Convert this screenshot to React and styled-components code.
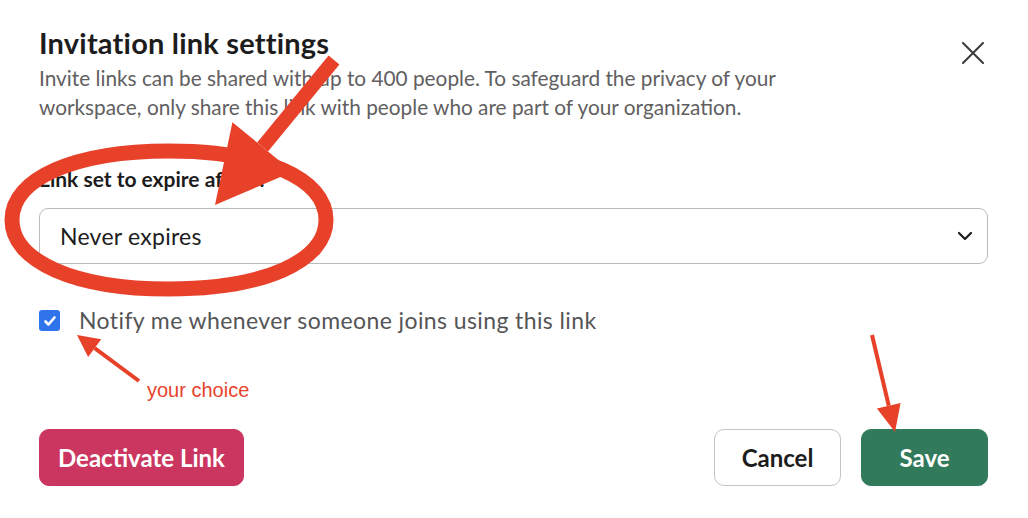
import React, { useState } from 'react'
import styled, { createGlobalStyle } from 'styled-components'

const GlobalStyle = createGlobalStyle`
  html, body {
    margin: 0;
    padding: 0;
    background: #ffffff;
  }
  body {
    font-family: Lato, "Open Sans", sans-serif;
    color: #1d1c1d;
  }
`

const Dialog = styled.section`
  position: relative;
  width: 1028px;
  height: 518px;
  box-sizing: border-box;
  padding: 23px 40px 0 39px;
  display: flex;
  flex-direction: column;
  overflow: hidden;
`

const Header = styled.header`
  display: flex;
  justify-content: space-between;
  align-items: flex-start;
`

const Title = styled.h1`
  margin: 0;
  font-size: 29px;
  line-height: 40px;
  letter-spacing: 0.2px;
  font-weight: 700;
  color: #1d1c1d;
`

const CloseButton = styled.button`
  border: none;
  background: none;
  padding: 0;
  margin: 15px 0 0 0;
  width: 30px;
  height: 30px;
  display: flex;
  align-items: center;
  justify-content: center;
  color: #3b3b3d;
  cursor: pointer;
`

const Description = styled.p`
  margin: 0;
  width: 800px;
  font-size: 20.8px;
  line-height: 29px;
  color: #616061;
`

const Label = styled.label`
  margin-top: 45px;
  font-size: 21px;
  line-height: 25px;
  font-weight: 700;
  color: #1d1c1d;
`

const SelectBox = styled.div`
  margin-top: 17px;
  height: 56px;
  box-sizing: border-box;
  border: 1px solid #bbbbbb;
  border-radius: 9px;
  display: flex;
  align-items: center;
  justify-content: space-between;
  padding: 0 14px 0 20px;
  font-size: 23px;
  letter-spacing: 0.25px;
  color: #1d1c1d;
`

const CheckRow = styled.div`
  margin-top: 44px;
  display: flex;
  align-items: flex-start;
  gap: 19px;
  font-size: 23px;
  line-height: 24px;
  letter-spacing: 0.4px;
  color: #555556;
`

const Check = styled.span`
  margin-top: 2px;
  width: 21px;
  height: 21px;
  border-radius: 3px;
  background: #2f74eb;
  display: flex;
  align-items: center;
  justify-content: center;
`

const Footer = styled.footer`
  margin-top: 97px;
  display: flex;
  align-items: center;
  gap: 20px;
`

const Button = styled.button`
  height: 57px;
  box-sizing: border-box;
  border-radius: 10px;
  padding: 0 ${(p) => p.$pad || 0}px;
  width: ${(p) => (p.$width ? `${p.$width}px` : 'auto')};
  font-family: Lato, "Open Sans", sans-serif;
  font-size: 24px;
  font-weight: 700;
  cursor: pointer;
  border: 1px solid ${(p) => p.$border};
  background: ${(p) => p.$bg};
  color: ${(p) => p.$fg};
`

const Spacer = styled.div`
  flex: 1;
`

const Markup = styled.svg`
  position: absolute;
  left: 0;
  top: 0;
  pointer-events: none;
`

const Note = styled.span`
  position: absolute;
  left: 147px;
  top: 380px;
  font-family: "Liberation Sans", Arial, sans-serif;
  font-size: 20px;
  line-height: 20px;
  color: #e8432b;
`

const ArrowLine = ({ x1, y1, x2, y2, width, head, spread }) => {
  const a = Math.atan2(y2 - y1, x2 - x1)
  const bx = x2 - Math.cos(a) * head
  const by = y2 - Math.sin(a) * head
  const px = Math.cos(a + Math.PI / 2) * head * spread
  const py = Math.sin(a + Math.PI / 2) * head * spread
  return (
    <g fill="#e8412a" stroke="#e8412a">
      <line x1={x1} y1={y1} x2={bx} y2={by} strokeWidth={width} />
      <polygon
        stroke="none"
        points={`${x2},${y2} ${bx + px},${by + py} ${bx - px},${by - py}`}
      />
    </g>
  )
}

// hand-drawn looking loop, a bit boxier than a true ellipse
const Loop = ({ cx, cy, rx, ry, k }) => {
  const kx = rx * k
  const ky = ry * k
  const d = [
    `M ${cx + rx} ${cy}`,
    `C ${cx + rx} ${cy + ky}, ${cx + kx} ${cy + ry}, ${cx} ${cy + ry}`,
    `C ${cx - kx} ${cy + ry}, ${cx - rx} ${cy + ky}, ${cx - rx} ${cy}`,
    `C ${cx - rx} ${cy - ky}, ${cx - kx} ${cy - ry}, ${cx} ${cy - ry}`,
    `C ${cx + kx} ${cy - ry}, ${cx + rx} ${cy - ky}, ${cx + rx} ${cy}`,
    'Z',
  ].join(' ')
  return <path d={d} fill="none" stroke="#e8412a" strokeWidth="15" />
}

export default function App() {
  const [notify, setNotify] = useState(true)

  return (
    <Dialog>
      <GlobalStyle />
      <Header>
        <div>
          <Title>Invitation link settings</Title>
          <Description>
            Invite links can be shared with up to 400 people. To safeguard the privacy of your
            workspace, only share this link with people who are part of your organization.
          </Description>
        </div>
        <CloseButton aria-label="Close">
          <svg width="22" height="22" viewBox="0 0 22 22" fill="none" stroke="currentColor" strokeWidth="2" strokeLinecap="round">
            <path d="M1 1 L21 21 M21 1 L1 21" />
          </svg>
        </CloseButton>
      </Header>

      <Label>Link set to expire after…</Label>
      <SelectBox>
        Never expires
        <svg width="16" height="16" viewBox="0 0 16 16" fill="none" stroke="#1d1c1d" strokeWidth="2.2" strokeLinecap="round" strokeLinejoin="round">
          <path d="M2 5 L8 11 L14 5" />
        </svg>
      </SelectBox>

      <CheckRow onClick={() => setNotify((v) => !v)}>
        <Check>
          {notify && (
            <svg width="14" height="14" viewBox="0 0 14 14" fill="none" stroke="#fff" strokeWidth="2.6" strokeLinecap="round" strokeLinejoin="round">
              <path d="M2.5 7.5 L5.5 10.5 L11.5 3.5" />
            </svg>
          )}
        </Check>
        Notify me whenever someone joins using this link
      </CheckRow>

      <Footer>
        <Button $bg="#cb3660" $fg="#ffffff" $border="#cb3660" $pad={18}>
          Deactivate Link
        </Button>
        <Spacer />
        <Button $bg="#ffffff" $fg="#1d1c1d" $border="#c4c4c4" $width={127}>
          Cancel
        </Button>
        <Button $bg="#327a5c" $fg="#ffffff" $border="#327a5c" $width={127}>
          Save
        </Button>
      </Footer>

      <Markup width="1028" height="518" viewBox="0 0 1028 518">
        <Loop cx={169} cy={220} rx={157} ry={69} k={0.6} />
        <ArrowLine x1={334} y1={60} x2={215} y2={205} width={14} head={75} spread={0.52} />
        <ArrowLine x1={139} y1={381} x2={77} y2={335} width={4} head={22} spread={0.5} />
        <ArrowLine x1={872} y1={335} x2={895} y2={432} width={4} head={27} spread={0.45} />
      </Markup>
      <Note>your choice</Note>
    </Dialog>
  )
}
